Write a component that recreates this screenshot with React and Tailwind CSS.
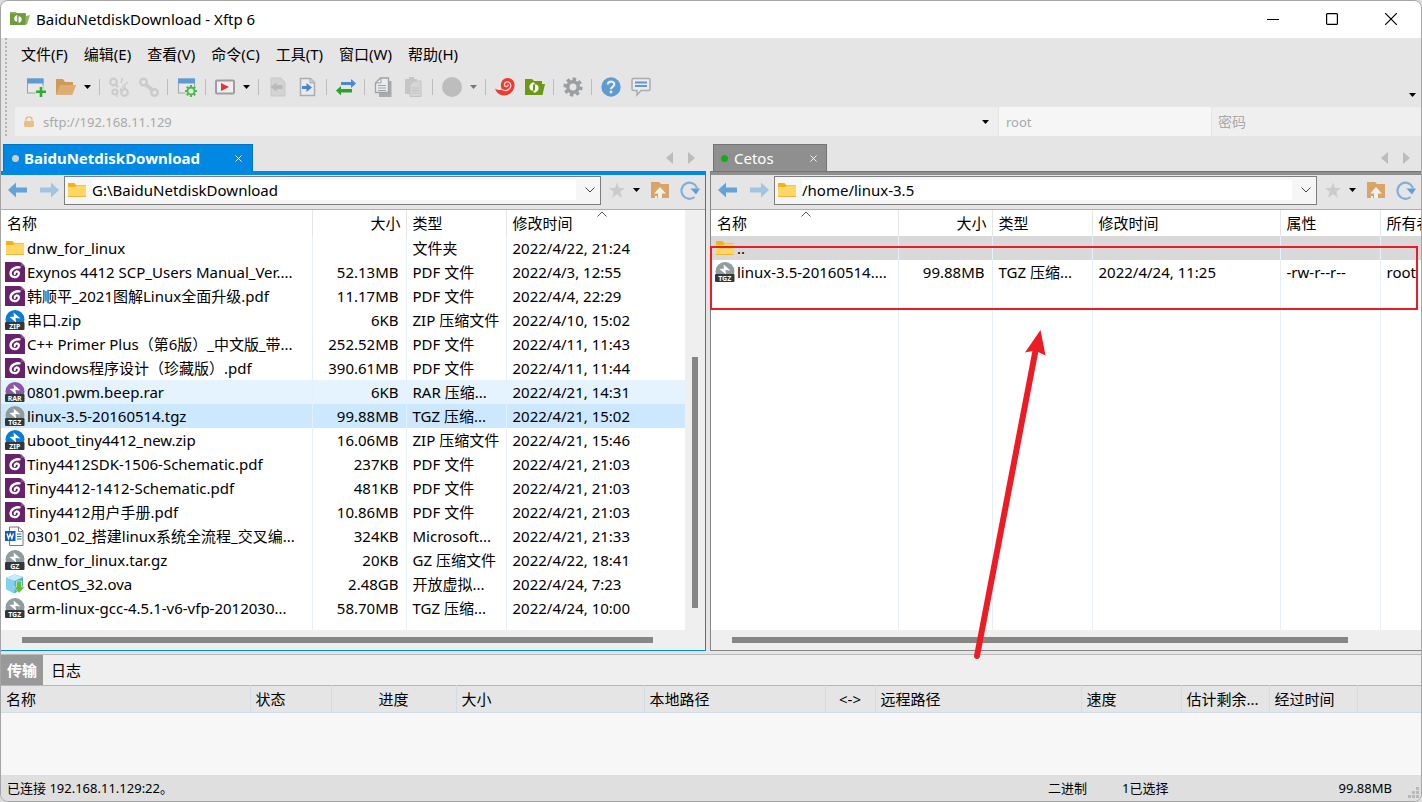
import React from "react";

const SvgIcon = ({ size = 20, className = "", children }) => (
  <svg width={size} height={size} viewBox={`0 0 ${size} ${size}`} fill="none" className={`shrink-0 ${className}`} aria-hidden="true">
    {children}
  </svg>
);

const gearTeeth = [0, 45, 90, 135, 180, 225, 270, 315];

const icons = {
  newSession: (
    <SvgIcon>
      <rect x="1.500" y="2" width="15.500" height="14" fill="#e9e9e9" stroke="#9a9fa3" />
      <rect x="1" y="1.500" width="16.500" height="5" fill="#5b9bd8" />
      <path d="M15 9v11M9.500 14.700h10.500" stroke="#e5e5e5" strokeWidth="4.500" />
      <path d="M15 10v10M10 14.700h10" stroke="#2eae2e" strokeWidth="2.600" />
    </SvgIcon>
  ),
  open: (
    <SvgIcon>
      <path d="M0 17.500V2h7l2 3h8v3h3l-4 9.500z" fill="#cf9a57" />
      <path d="M4 8h16l-3.500 9.500H0z" fill="#deae70" />
    </SvgIcon>
  ),
  disconnect: (
    <SvgIcon>
      <g stroke="#cbcbcb" strokeWidth="2.200">
        <circle cx="4.500" cy="5" r="3.300" /><circle cx="15.500" cy="15.500" r="3.300" />
        <path d="M6 7l3 3M11 12l3 2" />
        <circle cx="6" cy="15" r="2.500" />
        <path d="M12 6l1.500-5M14.500 8.500L19 5M8 18v2M13 10h4" strokeWidth="1.500" />
      </g>
    </SvgIcon>
  ),
  reconnect: (
    <SvgIcon>
      <g stroke="#cbcbcb" strokeWidth="2.400">
        <circle cx="4.500" cy="5" r="3.300" /><circle cx="15.500" cy="15.500" r="3.300" />
        <path d="M6.500 7.500l7 5.500" strokeWidth="4" />
      </g>
    </SvgIcon>
  ),
  properties: (
    <SvgIcon>
      <rect x="1.500" y="2" width="16" height="14" fill="#e9e9e9" stroke="#a3a7aa" />
      <rect x="1" y="1.500" width="17" height="5" fill="#5b9bd8" />
      <circle cx="14" cy="14" r="6" fill="#e5e5e5" />
      <circle cx="14" cy="14" r="3.500" stroke="#4bb84b" strokeWidth="1.800" />
      {gearTeeth.map((a) => <path key={a} d="M14 8v2.500" stroke="#4bb84b" strokeWidth="2" transform={`rotate(${a} 14 14)`} />)}
    </SvgIcon>
  ),
  play: (
    <SvgIcon>
      <rect x="1" y="3.500" width="18" height="13" rx="1" fill="#f0eeee" stroke="#9c9fa1" strokeWidth="2" />
      <path d="M6 6v8l8-4z" fill="#e2362f" />
    </SvgIcon>
  ),
  pageLeft: (
    <SvgIcon>
      <path d="M3 1h10l4 4v14H3z" fill="#d3d3d3" stroke="#c8c8c8" />
      <path d="M2.500 10l6-4.500V8h6v4h-6v2.500z" fill="#b9b9b9" />
    </SvgIcon>
  ),
  pageRight: (
    <SvgIcon>
      <path d="M2.500 1.500h10l4 4v13h-14z" fill="#ebebeb" stroke="#a9adb0" strokeWidth="1.500" />
      <path d="M12 1v5h5" fill="#c6cacd" stroke="#a9adb0" />
      <path d="M14 10.500L8.500 6v3H4v3h4.500v3z" fill="#4585d4" />
    </SvgIcon>
  ),
  transfer: (
    <SvgIcon>
      <path d="M20 6.500L15 2v3H5v3h10v3z" fill="#4a88d2" />
      <path d="M0 13.500L5 9v3h11v3.500H5v3z" fill="#2da12d" />
    </SvgIcon>
  ),
  copy: (
    <SvgIcon>
      <path d="M5 4h12.500v16H5z" fill="#a7abae" />
      <path d="M1.500 6l5-5h8v14.500h-13z" fill="#ececec" stroke="#9da2a6" strokeWidth="1.300" />
      <path d="M7 1v5H2" stroke="#9da2a6" />
      <path d="M4 8.500h8M4 11h8M4 13.500h8" stroke="#9da2a6" />
    </SvgIcon>
  ),
  paste: (
    <SvgIcon>
      <path d="M1 2h12v15H1zM5 0h5v3H5z" fill="#c6c6c6" />
      <path d="M6 8l4-4h7v15.500H6z" fill="#d5d5d5" stroke="#c2c2c2" />
      <path d="M8 11h7M8 13.500h7M8 16h7" stroke="#c2c2c2" />
    </SvgIcon>
  ),
  disc: <SvgIcon><circle cx="10" cy="10" r="10" fill="#bdbdbd" /></SvgIcon>,
  swirl: (
    <SvgIcon>
      <path d="M0 11.500C2 13 4.500 13.500 7 12.500C4.500 8 6.500 3.500 9 2C13-.5 19 1.500 19.500 7C20 14 14 19 8.500 18.500C4 18 1 15 0 11.500z" fill="#ee3a30" />
      <path d="M7 12.500C12 15.500 17 11 15.500 7C14 3.500 9 4.500 9.500 8C10 10.500 13.500 10 13 7.500" stroke="#fbd2ce" strokeWidth="1.300" />
    </SvgIcon>
  ),
  xftp: (
    <SvgIcon>
      <path d="M0 2h7l2 2h8v3h3l-2.500 11H0z" fill="#689a13" />
      <path d="M8 5.500v8H6.500C3.500 12 3.500 7 8 5.500z" fill="#fff" />
      <path d="M10 15.500v-8h1.500C14.500 9 14.500 14 10 15.500z" fill="#fff" />
      <path d="M7.500 5.500h2v2h-2zM8.500 13.500h2v2h-2z" fill="#fff" />
    </SvgIcon>
  ),
  gear: (
    <SvgIcon>
      {gearTeeth.map((a) => <path key={a} d="M10 .5v5" stroke="#9c9fa1" strokeWidth="3.600" transform={`rotate(${a + 10} 10 10)`} />)}
      <circle cx="10" cy="10" r="5.200" stroke="#9c9fa1" strokeWidth="3.400" />
    </SvgIcon>
  ),
  help: (
    <SvgIcon>
      <circle cx="10" cy="10" r="9.700" fill="#5f9ad3" />
      <path d="M6.800 7.500C7 3.500 13.500 3.600 13.300 7.500C13.200 9.500 10 9.700 10 12.200" stroke="#e8eef4" strokeWidth="2.200" />
      <circle cx="10" cy="15" r="1.400" fill="#e8eef4" />
    </SvgIcon>
  ),
  chat: (
    <SvgIcon>
      <path d="M2.500 1.500h15q1.500 0 1.500 1.500v9q0 1.500-1.500 1.500H10L6 18v-4.500H2.500Q1 13.500 1 12V3q0-1.500 1.500-1.500z" fill="#ebebeb" stroke="#a9acae" strokeWidth="1.500" />
      <path d="M4 5.500h12M4 9h12" stroke="#5f9ad3" strokeWidth="1.800" />
    </SvgIcon>
  ),
  folder: (
    <SvgIcon>
      <path d="M1 3h6.500l1.500 2h10v3H1z" fill="#f2b21c" />
      <path d="M1 7h7l2-1.500h9V17H1z" fill="#fdd663" />
      <path d="M1 16.500h18" stroke="#f0b73a" />
    </SvgIcon>
  ),
  pdf: (
    <SvgIcon>
      <path d="M0 0h15l5 5v15H0z" fill="#68216b" />
      <path d="M16 0l4 4h-4z" fill="#8d5190" />
      <path d="M15.500 5.500C11 4.500 6 7 5.500 11C5.500 15.500 11.500 16.500 13.500 13C14.500 11 13.500 9.200 11.500 9.500C9.700 10 9.300 12 10.500 12.500" stroke="#fff" strokeWidth="2.300" />
    </SvgIcon>
  ),
  word: (
    <SvgIcon>
      <path d="M4.500 1h9l4.500 4v14.500H4.500z" fill="#fff" stroke="#7b7b7b" />
      <path d="M13.500 1v4.500H18" stroke="#7b7b7b" />
      <path d="M12 8h4.500M12 10.500h4.500M12 13h4.500" stroke="#2b6cc4" />
      <path d="M0 5h10.500v10H0z" fill="#185abd" />
      <path d="M2 7.500l1.500 5L5.200 8l1.700 4.500L8.500 7.500" stroke="#fff" strokeWidth="1.300" />
    </SvgIcon>
  ),
  ova: (
    <SvgIcon>
      <path d="M1 4l8.500-3.500L18 3v11.500l-8.500 5L1 15z" fill="#4fb0e0" />
      <path d="M1 4l8.500-3.500L18 3 9.500 7z" fill="#c4ecfa" />
      <path d="M1 4l8.500 3v12.500L1 15z" fill="#84d0f0" />
      <path d="M11.500 7h5v6H20l-6 6-5.500-6h3z" fill="#63c132" stroke="#e9f7e2" strokeWidth=".6" />
    </SvgIcon>
  ),
  back: (
    <SvgIcon><path d="M0 10l8-7.500v5h11v5H8v5z" fill="#64a3da" /></SvgIcon>
  ),
  forward: (
    <SvgIcon><path d="M20 10l-8-7.500v5H1v5h11v5z" fill="#a2c4e0" /></SvgIcon>
  ),
  star: (
    <SvgIcon size={16}><path d="M8 .5l2 5.500h6l-4.700 3.700 1.700 6L8 12.300l-5 3.400 1.700-6L0 6h6z" fill="#cbcbcb" /></SvgIcon>
  ),
  up: (
    <SvgIcon>
      <path d="M1 2h8l2 2h8v14H1z" fill="#d9a566" />
      <path d="M5 18v-2h2v2zM10 7l6 6.500h-4V18H8v-4.500H4z" fill="#f3efea" />
    </SvgIcon>
  ),
  refresh: (
    <SvgIcon>
      <path d="M14.500 17A8 8 0 1 1 17 8" stroke="#7fb0dc" strokeWidth="2.200" />
      <path d="M10.500 8.500H20L16 14.500z" fill="#5f9fd9" />
    </SvgIcon>
  ),
};

function Archive({ label, color }) {
  return (
    <SvgIcon>
      <circle cx="10" cy="9.500" r="9.500" fill={color} />
      <path d="M8.500 2.500l.5 4-4.500.5 6.500 5.500-.5-4.500 5 .5z" fill="#fff" />
      <rect x="0" y="12" width="19.500" height="8" rx="1" fill="#32373a" />
      <text x="9.700" y="18.600" textAnchor="middle" fontSize="7" fontWeight="700" fill="#fff">{label}</text>
    </SvgIcon>
  );
}

const fileIcons = {
  folder: icons.folder,
  pdf: icons.pdf,
  word: icons.word,
  ova: icons.ova,
  zip: <Archive label="ZIP" color="#0a7bd6" />,
  rar: <Archive label="RAR" color="#8c55a5" />,
  tgz: <Archive label="TGZ" color="#909c9e" />,
  gz: <Archive label="GZ" color="#909c9e" />,
};

const Caret = ({ color = "#000" }) => (
  <svg width="7" height="4" viewBox="0 0 7 4" className="shrink-0" aria-hidden="true"><path d="M0 0h7L3.500 4z" fill={color} /></svg>
);
const Chevron = () => (
  <svg width="10" height="6" viewBox="0 0 10 6" fill="none" aria-hidden="true"><path d="M.5.5L5 5 9.500.5" stroke="#444" /></svg>
);
const SortMark = () => (
  <svg width="10" height="6" viewBox="0 0 10 6" fill="none" aria-hidden="true"><path d="M.5 5.500L5 1l4.500 4.500" stroke="#555" /></svg>
);
const Cross = ({ size = 8 }) => (
  <svg width={size} height={size} viewBox="0 0 8 8" fill="none" aria-hidden="true"><path d="M.5.5l7 7M7.500.5l-7 7" stroke="#fff" /></svg>
);

const toolbar = [
  [["新建", "newSession"], ["打开", "open", "#000"]],
  [["断开", "disconnect"], ["重新连接", "reconnect"]],
  [["属性", "properties"]],
  [["运行", "play", "#000"]],
  [["向左传输", "pageLeft"], ["向右传输", "pageRight"]],
  [["同步", "transfer"]],
  [["复制", "copy"], ["粘贴", "paste"]],
  [["停止", "disc", "#777"]],
  [["Xshell", "swirl"], ["Xftp", "xftp"]],
  [["选项", "gear"]],
  [["帮助", "help"], ["反馈", "chat"]],
];

const localFiles = [
  ["folder", "dnw_for_linux", "", "文件夹", "2022/4/22, 21:24"],
  ["pdf", "Exynos 4412 SCP_Users Manual_Ver....", "52.13MB", "PDF 文件", "2022/4/3, 12:55"],
  ["pdf", "韩顺平_2021图解Linux全面升级.pdf", "11.17MB", "PDF 文件", "2022/4/4, 22:29"],
  ["zip", "串口.zip", "6KB", "ZIP 压缩文件", "2022/4/10, 15:02"],
  ["pdf", "C++ Primer Plus（第6版）_中文版_带...", "252.52MB", "PDF 文件", "2022/4/11, 11:43"],
  ["pdf", "windows程序设计（珍藏版）.pdf", "390.61MB", "PDF 文件", "2022/4/11, 11:44"],
  ["rar", "0801.pwm.beep.rar", "6KB", "RAR 压缩...", "2022/4/21, 14:31", "bg-[#e5f3ff]"],
  ["tgz", "linux-3.5-20160514.tgz", "99.88MB", "TGZ 压缩...", "2022/4/21, 15:02", "bg-[#cce8ff]"],
  ["zip", "uboot_tiny4412_new.zip", "16.06MB", "ZIP 压缩文件", "2022/4/21, 15:46"],
  ["pdf", "Tiny4412SDK-1506-Schematic.pdf", "237KB", "PDF 文件", "2022/4/21, 21:03"],
  ["pdf", "Tiny4412-1412-Schematic.pdf", "481KB", "PDF 文件", "2022/4/21, 21:03"],
  ["pdf", "Tiny4412用户手册.pdf", "10.86MB", "PDF 文件", "2022/4/21, 21:03"],
  ["word", "0301_02_搭建linux系统全流程_交叉编...", "324KB", "Microsoft...", "2022/4/21, 21:33"],
  ["gz", "dnw_for_linux.tar.gz", "20KB", "GZ 压缩文件", "2022/4/22, 18:41"],
  ["ova", "CentOS_32.ova", "2.48GB", "开放虚拟...", "2022/4/24, 7:23"],
  ["tgz", "arm-linux-gcc-4.5.1-v6-vfp-2012030...", "58.70MB", "TGZ 压缩...", "2022/4/24, 10:00"],
];

const remoteFiles = [
  ["folder", "..", "", "", "", "bg-[#d9d9d9]", "", ""],
  ["tgz", "linux-3.5-20160514....", "99.88MB", "TGZ 压缩...", "2022/4/24, 11:25", "", "-rw-r--r--", "root"],
];

function FileTable({ files, columns, sorted, extra }) {
  return (
    <table className="w-full table-fixed border-collapse bg-white text-left">
      <colgroup>
        {columns.map(([name, width]) => <col key={name} className={width} />)}
      </colgroup>
      <thead>
        <tr className="h-[26px]">
          {columns.map(([name], i) => (
            <th
              key={name}
              className={`relative overflow-hidden whitespace-nowrap p-0 font-normal ${i === 1 ? "pr-[5px] text-right" : "pl-[6px]"} ${i < columns.length - 1 ? "border-r border-r-[#e5e5e5]" : ""}`}
            >
              {name}
              {sorted === name && <span className="absolute left-[90px] top-px"><SortMark /></span>}
            </th>
          ))}
        </tr>
      </thead>
      <tbody>
        {files.map(([icon, name, size, type, date, tone, attr, owner]) => {
          const cells = extra ? [type, date, attr, owner] : [type, date];
          return (
            <tr key={name} className={`h-6 ${tone || ""}`}>
              <td className="overflow-hidden whitespace-nowrap border-r border-r-[#e5f0fd] p-0 pl-1">
                <span className="flex h-6 items-center gap-[2px]">{fileIcons[icon]}<span>{name}</span></span>
              </td>
              <td className="whitespace-nowrap border-r border-r-[#e5f0fd] p-0 pr-[7px] text-right">{size}</td>
              {cells.map((c, i) => (
                <td key={i} className={`overflow-hidden whitespace-nowrap p-0 pl-[6px] ${i < cells.length - 1 ? "border-r border-r-[#e5f0fd]" : ""}`}>{c}</td>
              ))}
            </tr>
          );
        })}
        <tr className="h-full">
          {columns.map(([name], i) => (
            <td key={name} className={`p-0 ${i < columns.length - 1 ? "border-r border-r-[#e5f0fd]" : ""}`} />
          ))}
        </tr>
      </tbody>
    </table>
  );
}

function TabArrows() {
  return (
    <div className="flex items-center gap-[15px] pr-[11px]">
      <button aria-label="上一个标签"><svg width="7" height="12" viewBox="0 0 7 12"><path d="M7 0v12L0 6z" fill="#bcbcbc" /></svg></button>
      <button aria-label="下一个标签"><svg width="7" height="12" viewBox="0 0 7 12"><path d="M0 0v12l7-6z" fill="#bcbcbc" /></svg></button>
    </div>
  );
}

function PathBar({ path, label }) {
  return (
    <div className="flex h-[35px] items-center border-b border-b-[#adadad] pb-1 pl-[7px]">
      <button aria-label="后退">{icons.back}</button>
      <button aria-label="前进" className="ml-[11px]">{icons.forward}</button>
      <div className="ml-[5px] flex h-[29px] min-w-0 flex-1 items-center border border-[#7d7d7d] bg-[#f6f6f6] pl-[2px]">
        {icons.folder}
        <input aria-label={label} defaultValue={path} className="ml-[5px] h-5 min-w-0 flex-1 bg-white outline-none" />
        <button aria-label="展开路径" className="flex w-6 justify-center pl-1"><Chevron /></button>
      </div>
      <button aria-label="收藏" className="ml-2">{icons.star}</button>
      <button aria-label="收藏列表" className="ml-2"><Caret /></button>
      <button aria-label="上级目录" className="ml-[10px]">{icons.up}</button>
      <button aria-label="刷新" className="ml-[10px] mr-[5px]">{icons.refresh}</button>
    </div>
  );
}

const transferColumns = [
  ["名称", "w-[249px]", "pl-[5px]"],
  ["状态", "w-[81px]", "pl-[5px]"],
  ["进度", "w-[125px]", "text-center"],
  ["大小", "w-[188px]", "pl-[5px]"],
  ["本地路径", "w-[181px]", "pl-[5px]"],
  ["<->", "w-[50px]", "text-center"],
  ["远程路径", "w-[206px]", "pl-[5px]"],
  ["速度", "w-[100px]", "pl-[5px]"],
  ["估计剩余...", "w-[88px]", "pl-[5px]"],
  ["经过时间", "w-[88px]", "pl-[5px]"],
];

export default function App() {
  return (
    <div className="flex min-h-screen bg-[#dcdcdc] font-['Noto_Sans','Noto_Sans_CJK_SC',sans-serif] text-[15px] leading-5 text-black">
      <div className="flex w-full flex-col overflow-hidden rounded-lg border border-[#a5a5a5] bg-[#e5e5e5]">
        <header className="flex h-[37px] shrink-0 items-center bg-white pb-[2px] pl-[9px]">
          <SvgIcon>
            <path d="M0 3h6l1 1h9v3l4-1-3 9.500H0z" fill="#94b565" />
            <path d="M0 4.500h15.500V16H0z" fill="#6f9d3c" />
            <path d="M7.200 6v6.500H6C3.500 11.500 3.500 7 7.200 6z" fill="#fff" />
            <path d="M8.500 14V7.500h1.300C12.500 8.500 12.500 13 8.500 14z" fill="#fff" />
          </SvgIcon>
          <h1 className="ml-[6px] flex-1">BaiduNetdiskDownload - Xftp 6</h1>
          <div className="flex items-center gap-[47px] pr-6">
            <button aria-label="最小化"><svg width="12" height="12" viewBox="0 0 12 12"><path d="M0 6.500h12" stroke="#000" /></svg></button>
            <button aria-label="最大化"><svg width="12" height="12" viewBox="0 0 12 12" fill="none"><rect x=".6" y=".6" width="10.800" height="10.800" rx="1" stroke="#000" strokeWidth="1.200" /></svg></button>
            <button aria-label="关闭"><svg width="12" height="12" viewBox="0 0 12 12"><path d="M0 0l12 12M12 0L0 12" stroke="#000" strokeWidth="1.200" /></svg></button>
          </div>
        </header>

        <div className="flex shrink-0 pl-1">
          <div className="w-0 border-l-2 border-dotted border-[#b5b5b5]" />
          <div className="min-w-0 flex-1">
            <nav className="flex h-[31px] items-center gap-4 pl-[14px]">
              {["文件(F)", "编辑(E)", "查看(V)", "命令(C)", "工具(T)", "窗口(W)", "帮助(H)"].map((m) => <button key={m}>{m}</button>)}
            </nav>
            <div className="mb-[3px] flex h-[35px] items-center pl-[19px]">
              {toolbar.map((group, g) => (
                <React.Fragment key={g}>
                  {g > 0 && <div className="ml-2 mr-[9px] h-4 w-px bg-[#bdbdbd]" />}
                  <div className="flex items-center gap-[10px]">
                    {group.map(([label, icon, caret]) => (
                      <div key={label} className="flex items-center">
                        <button aria-label={label}>{icons[icon]}</button>
                        {caret && <button aria-label={`${label}菜单`} className="pl-2"><Caret color={caret} /></button>}
                      </div>
                    ))}
                  </div>
                </React.Fragment>
              ))}
              <button aria-label="更多工具" className="ml-auto mr-[5px] mt-4"><Caret /></button>
            </div>
            <div className="flex h-[29px] gap-px pl-2 text-[14px]">
              <div className="flex min-w-0 flex-1 items-center bg-[#efefef] pl-2 pr-[9px]">
                <svg width="12" height="12" viewBox="0 0 12 12" fill="none" aria-hidden="true">
                  <path d="M3 5V3.500Q3 1 6 1t3 2.500V5" stroke="#e9bf8a" strokeWidth="1.500" />
                  <rect x="1" y="5" width="10" height="6" rx="1" fill="#e9bf8a" />
                </svg>
                <input aria-label="主机" defaultValue="sftp://192.168.11.129" className="ml-2 min-w-0 flex-1 bg-transparent text-[13px] text-[#a9a9a9] outline-none" />
                <button aria-label="主机列表"><Caret /></button>
              </div>
              <input aria-label="用户名" defaultValue="root" className="w-[212px] bg-[#f6f6f6] pl-[7px] text-[13px] text-[#a9a9a9] outline-none" />
              <input aria-label="密码" type="password" placeholder="密码" className="w-[209px] bg-[#efefef] pl-[6px] placeholder:text-[#a9a9a9] outline-none" />
            </div>
          </div>
        </div>

        <main className="mt-2 flex flex-1 gap-1">
          <section className="flex min-w-0 flex-[705] flex-col">
            <div className="flex h-[27px] items-center justify-between pl-[2px]">
              <div className="flex h-full w-[250px] items-center border border-b-0 border-[#0074c4] bg-[#0088e2] pl-2 pr-[10px] font-bold text-white">
                <span className="mr-[5px] size-[7px] rounded-full bg-[#cfcfcf]" />
                <span className="flex-1">BaiduNetdiskDownload</span>
                <button aria-label="关闭标签"><Cross size={7} /></button>
              </div>
              <TabArrows />
            </div>
            <div className="flex flex-1 flex-col border-b border-r border-b-[#0089e3] border-r-[#0089e3]">
              <div className="h-1 bg-[#0088e2]" />
              <PathBar path="G:\BaiduNetdiskDownload" label="本地路径" />
              <div className="flex flex-1">
                <div className="flex min-w-0 flex-1">
                  <FileTable files={localFiles} sorted="修改时间" columns={[["名称", ""], ["大小", "w-[94px]"], ["类型", "w-[100px]"], ["修改时间", "w-[179px]"]]} />
                </div>
                <div className="flex w-5 flex-col items-center bg-[#efefef]">
                  <div className="flex-[147]" />
                  <div className="w-[6px] flex-[251] bg-[#868686]" />
                  <div className="flex-[22]" />
                </div>
              </div>
              <div className="flex h-5 items-center bg-[#efefef] pl-[21px] pr-[52px]"><div className="h-[6px] flex-1 bg-[#868686]" /></div>
            </div>
          </section>

          <section className="relative flex min-w-0 flex-[711] flex-col">
            <div className="flex h-[27px] items-center justify-between pl-[3px]">
              <div className="flex h-full w-[114px] items-center border border-b-0 border-[#747474] bg-[#8f8f8f] pl-[7px] pr-[9px] text-white">
                <span className="mr-[6px] size-[7px] rounded-full bg-[#10b010]" />
                <span className="flex-1">Cetos</span>
                <button aria-label="关闭标签"><Cross size={7} /></button>
              </div>
              <TabArrows />
            </div>
            <div className="flex flex-1 flex-col border-b border-l border-b-[#858585] border-l-[#858585]">
              <div className="h-1 border-t border-t-[#747474] bg-[#8f8f8f]" />
              <PathBar path="/home/linux-3.5" label="远程路径" />
              <div className="flex min-w-0 flex-1">
                <FileTable extra files={remoteFiles} sorted="名称" columns={[["名称", ""], ["大小", "w-[94px]"], ["类型", "w-[100px]"], ["修改时间", "w-[188px]"], ["属性", "w-[100px]"], ["所有者", "w-[41px]"]]} />
              </div>
              <div className="flex h-5 items-center bg-[#efefef] pl-[21px] pr-[73px]"><div className="h-[6px] flex-1 bg-[#868686]" /></div>
            </div>
            <div className="pointer-events-none absolute left-0 right-[3px] top-[102px] h-[64px] border-2 border-[#ed1c24]" />
            <svg width="80" height="334" viewBox="0 0 80 334" className="pointer-events-none absolute left-[262px] top-[184px]" aria-hidden="true">
              <path d="M5 328L64 20" stroke="#ed1c24" strokeWidth="6" strokeLinecap="round" />
              <path d="M68.500 2L73.500 27.500 63 22.500 53 24.500z" fill="#ed1c24" />
            </svg>
          </section>
        </main>

        <section className="mt-[3px] shrink-0 border-t border-t-[#bababa]">
          <div className="flex h-[30px] bg-[#efefef]">
            <button className="bg-[#999] px-[6px] font-bold text-white">传输</button>
            <button className="px-2">日志</button>
          </div>
          <table className="w-full table-fixed border-collapse text-left">
            <colgroup>
              {transferColumns.map(([name, width]) => <col key={name} className={width} />)}
              <col />
            </colgroup>
            <thead>
              <tr className="h-[27px] border-b border-t border-b-[#d0dce8] border-t-[#b5b5b5]">
                {transferColumns.map(([name, , align]) => (
                  <th key={name} className={`whitespace-nowrap border-r border-r-[#d0dce8] p-0 font-normal ${align}`}>{name}</th>
                ))}
                <td />
              </tr>
            </thead>
          </table>
          <div className="h-[62px] bg-[#f7f7f7]" />
        </section>

        <footer className="relative flex h-[26px] shrink-0 items-center bg-[#dfdfdf] pl-[6px] pr-[29px] text-[13px]">
          <span className="flex-1">已连接 192.168.11.129:22。</span>
          <span className="w-[74px]">二进制</span>
          <span className="w-[170px]">1已选择</span>
          <span className="w-[100px] text-right">99.88MB</span>
          <svg width="12" height="12" viewBox="0 0 12 12" className="absolute bottom-[2px] right-[2px]" aria-hidden="true">
            <path d="M9 0h3v3H9zM9 4h3v3H9zM5 4h3v3H5zM9 8h3v3H9zM5 8h3v3H5zM1 8h3v3H1z" fill="#b9b9b9" />
          </svg>
        </footer>
      </div>
    </div>
  );
}
